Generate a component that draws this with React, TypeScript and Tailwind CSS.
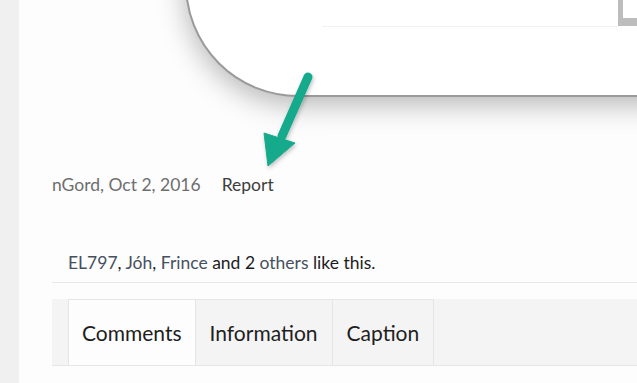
const linkCls = "text-[#46505e]";

function Tabs() {
  const tabs = ["Comments", "Information", "Caption"];
  return (
    <div className="flex bg-[#f4f4f4] border-b border-[#e6e6e6] pl-4">
      {tabs.map((t, i) => (
        <div
          key={t}
          className={
            i === 0
              ? "h-[66px] flex items-center px-[13px] border-t border-l border-r border-[#e6e6e6] bg-[#fdfdfd] -mb-px"
              : "h-[66px] flex items-center px-[14px] border-t border-r border-[#e6e6e6]"
          }
        >
          <span className="text-[21px] text-[#1e1e1e]">{t}</span>
        </div>
      ))}
    </div>
  );
}

export default function App() {
  return (
    <div
      className="w-[637px] h-[383px] flex overflow-hidden bg-[#fdfdfd]"
      style={{ fontFamily: "Lato, 'Liberation Sans', sans-serif" }}
    >
      <div className="w-[19px] shrink-0 bg-[#f0f0f0]" />
      <div className="relative flex-1 pl-[33px]">
        {/* zoomed callout */}
        <div className="absolute left-[166px] top-[-60px] right-[-40px] h-[157px] bg-white border-2 border-[#9a9a9a] rounded-bl-[113px] shadow-[0_8px_28px_rgba(0,0,0,0.28)]">
          <div className="absolute left-[135px] top-[84px] w-[296px] h-px bg-[#f1f1f1]" />
          <div className="absolute left-[431px] top-[58px] w-[40px] h-[26px] bg-[#bdbdbd]">
            <div className="ml-[5px] h-[18px] bg-white" />
          </div>
        </div>

        <svg
          className="absolute left-[236px] top-[65px]"
          width="70"
          height="110"
          viewBox="255 65 70 110"
        >
          <defs>
            <filter id="sh" x="-30%" y="-30%" width="160%" height="160%">
              <feDropShadow dx="1" dy="2" stdDeviation="2" floodColor="#000" floodOpacity="0.25" />
            </filter>
          </defs>
          <g filter="url(#sh)" fill="#14aa8c" stroke="#14aa8c">
            <line x1="308" y1="77" x2="282" y2="136" strokeWidth="9" strokeLinecap="round" />
            <polygon points="264,133 295,143 268,166" strokeWidth="1" strokeLinejoin="round" />
          </g>
        </svg>

        <div className="pt-[173px] text-[17.5px] leading-6 flex">
          <span className="text-[#6e6e6e]">nGord, Oct 2, 2016</span>
          <span className="ml-[21px] text-[#3d3d3d]">Report</span>
        </div>

        <div className="mt-[54px] pl-4 pb-[7px] text-[17.5px] leading-6 text-[#1c1c1c] border-b border-[#e8e8e8]">
          <span className={linkCls}>EL797</span>, <span className={linkCls}>Jóh</span>,{" "}
          <span className={linkCls}>Frince</span> and 2 <span className={linkCls}>others</span> like this.
        </div>

        <div className="mt-4">
          <Tabs />
        </div>
      </div>
    </div>
  );
}
